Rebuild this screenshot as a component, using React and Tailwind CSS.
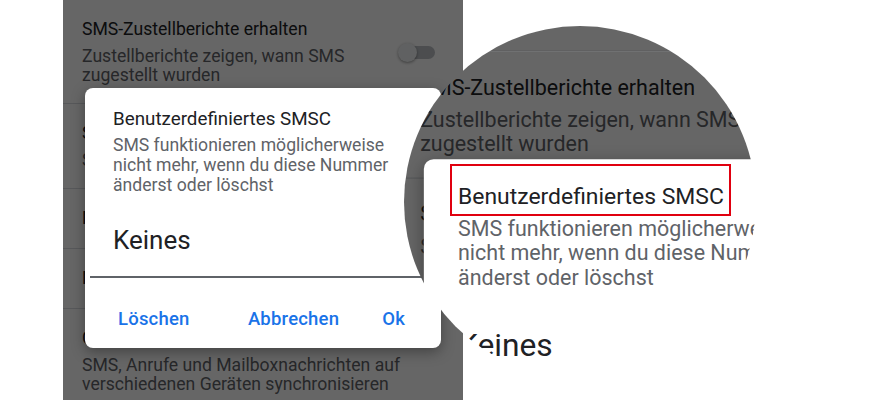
const items = [
  {
    title: 'SMS-Zustellberichte erhalten',
    sub: ['Zustellberichte zeigen, wann SMS', 'zugestellt wurden'],
    toggle: true,
  },
  { title: 'SMSC', sub: ['Standard-SMSC verwenden'] },
  { title: 'Nummer' },
  { title: 'Notfallbenachrichtigungen' },
  {
    title: 'Chats synchronisieren',
    sub: ['SMS, Anrufe und Mailboxnachrichten auf', 'verschiedenen Geräten synchronisieren'],
  },
]

function Toggle() {
  return (
    <div className="relative w-[37px] h-[19px] shrink-0">
      <div className="absolute right-0 top-[3px] w-[30px] h-[13px] rounded-full bg-[#bdc1c6]" />
      <div className="absolute left-0 top-0 w-[19px] h-[19px] rounded-full bg-[#f1f3f4] shadow-[0_1px_3px_rgba(0,0,0,0.4)]" />
    </div>
  )
}

function SettingRow({ item }) {
  return (
    <div className={`flex items-center justify-between pl-[19px] pr-[28px] pt-[20px] border-b border-[#dadce0] ${item.sub ? 'pb-[18px]' : 'pb-[20px]'}`}>
      <div className="whitespace-nowrap">
        <div className="text-[17.6px] leading-[19px] text-[#202124]">{item.title}</div>
        {item.sub && (
          <div className="mt-[8px] text-[17.6px] leading-[19px] text-[#5f6368]">
            {item.sub.map((line) => (
              <div key={line}>{line}</div>
            ))}
          </div>
        )}
      </div>
      {item.toggle && <Toggle />}
    </div>
  )
}

function Phone() {
  return (
    <div className="relative w-[400px] h-[400px] overflow-hidden bg-white font-[Roboto,sans-serif]">
      {/* settings list */}
      <div>
        {items.map((item) => (
          <SettingRow key={item.title} item={item} />
        ))}
      </div>

      {/* dim */}
      <div className="absolute inset-0 bg-black/60" />

      {/* dialog */}
      <div className="absolute left-[22px] top-[88px] w-[356px] h-[260px] rounded-[8px] bg-white shadow-[0_4px_14px_rgba(0,0,0,0.35)] flex flex-col whitespace-nowrap">
        <div className="pt-[20px] pl-[28px] text-[18.8px] leading-[22px] text-[#202124]">
          Benutzerdefiniertes SMSC
        </div>
        <div className="mt-[5px] pl-[28px] text-[17.6px] leading-[20px] text-[#5f6368]">
          <div>SMS funktionieren möglicherweise</div>
          <div>nicht mehr, wenn du diese Nummer</div>
          <div>änderst oder löschst</div>
        </div>
        <div className="mt-[30px] mx-[5px]">
          <div className="pl-[23px] text-[26px] leading-[30px] text-[#202124]">Keines</div>
          <div className="mt-[21px] h-[1.5px] bg-[#5f6368]" />
        </div>
        <div className="mt-[30px] flex pl-[33px] pr-[36px] text-[18.5px] leading-[22px] font-medium tracking-[0.2px] text-[#1a73e8]">
          <span>Löschen</span>
          <span className="ml-auto">Abbrechen</span>
          <span className="ml-[43px]">Ok</span>
        </div>
      </div>
    </div>
  )
}

export default function App() {
  return (
    <div className="relative w-[879px] h-[400px] overflow-hidden bg-white flex pl-[63px]">
      <Phone />

      {/* magnifier */}
      <div className="absolute left-[404px] top-[26px] w-[352px] h-[352px] rounded-full overflow-hidden">
        <div className="absolute left-[-7px] top-[-1px] origin-top-left scale-[1.22] bg-[#666]">
          <div className="h-[21px]" />
          <div className="h-px bg-[#575859]" />
          <Phone />
        </div>
        <div className="absolute left-[46px] top-[138px] w-[281px] h-[52px] border-2 border-[#e0000f]" />
      </div>
    </div>
  )
}
